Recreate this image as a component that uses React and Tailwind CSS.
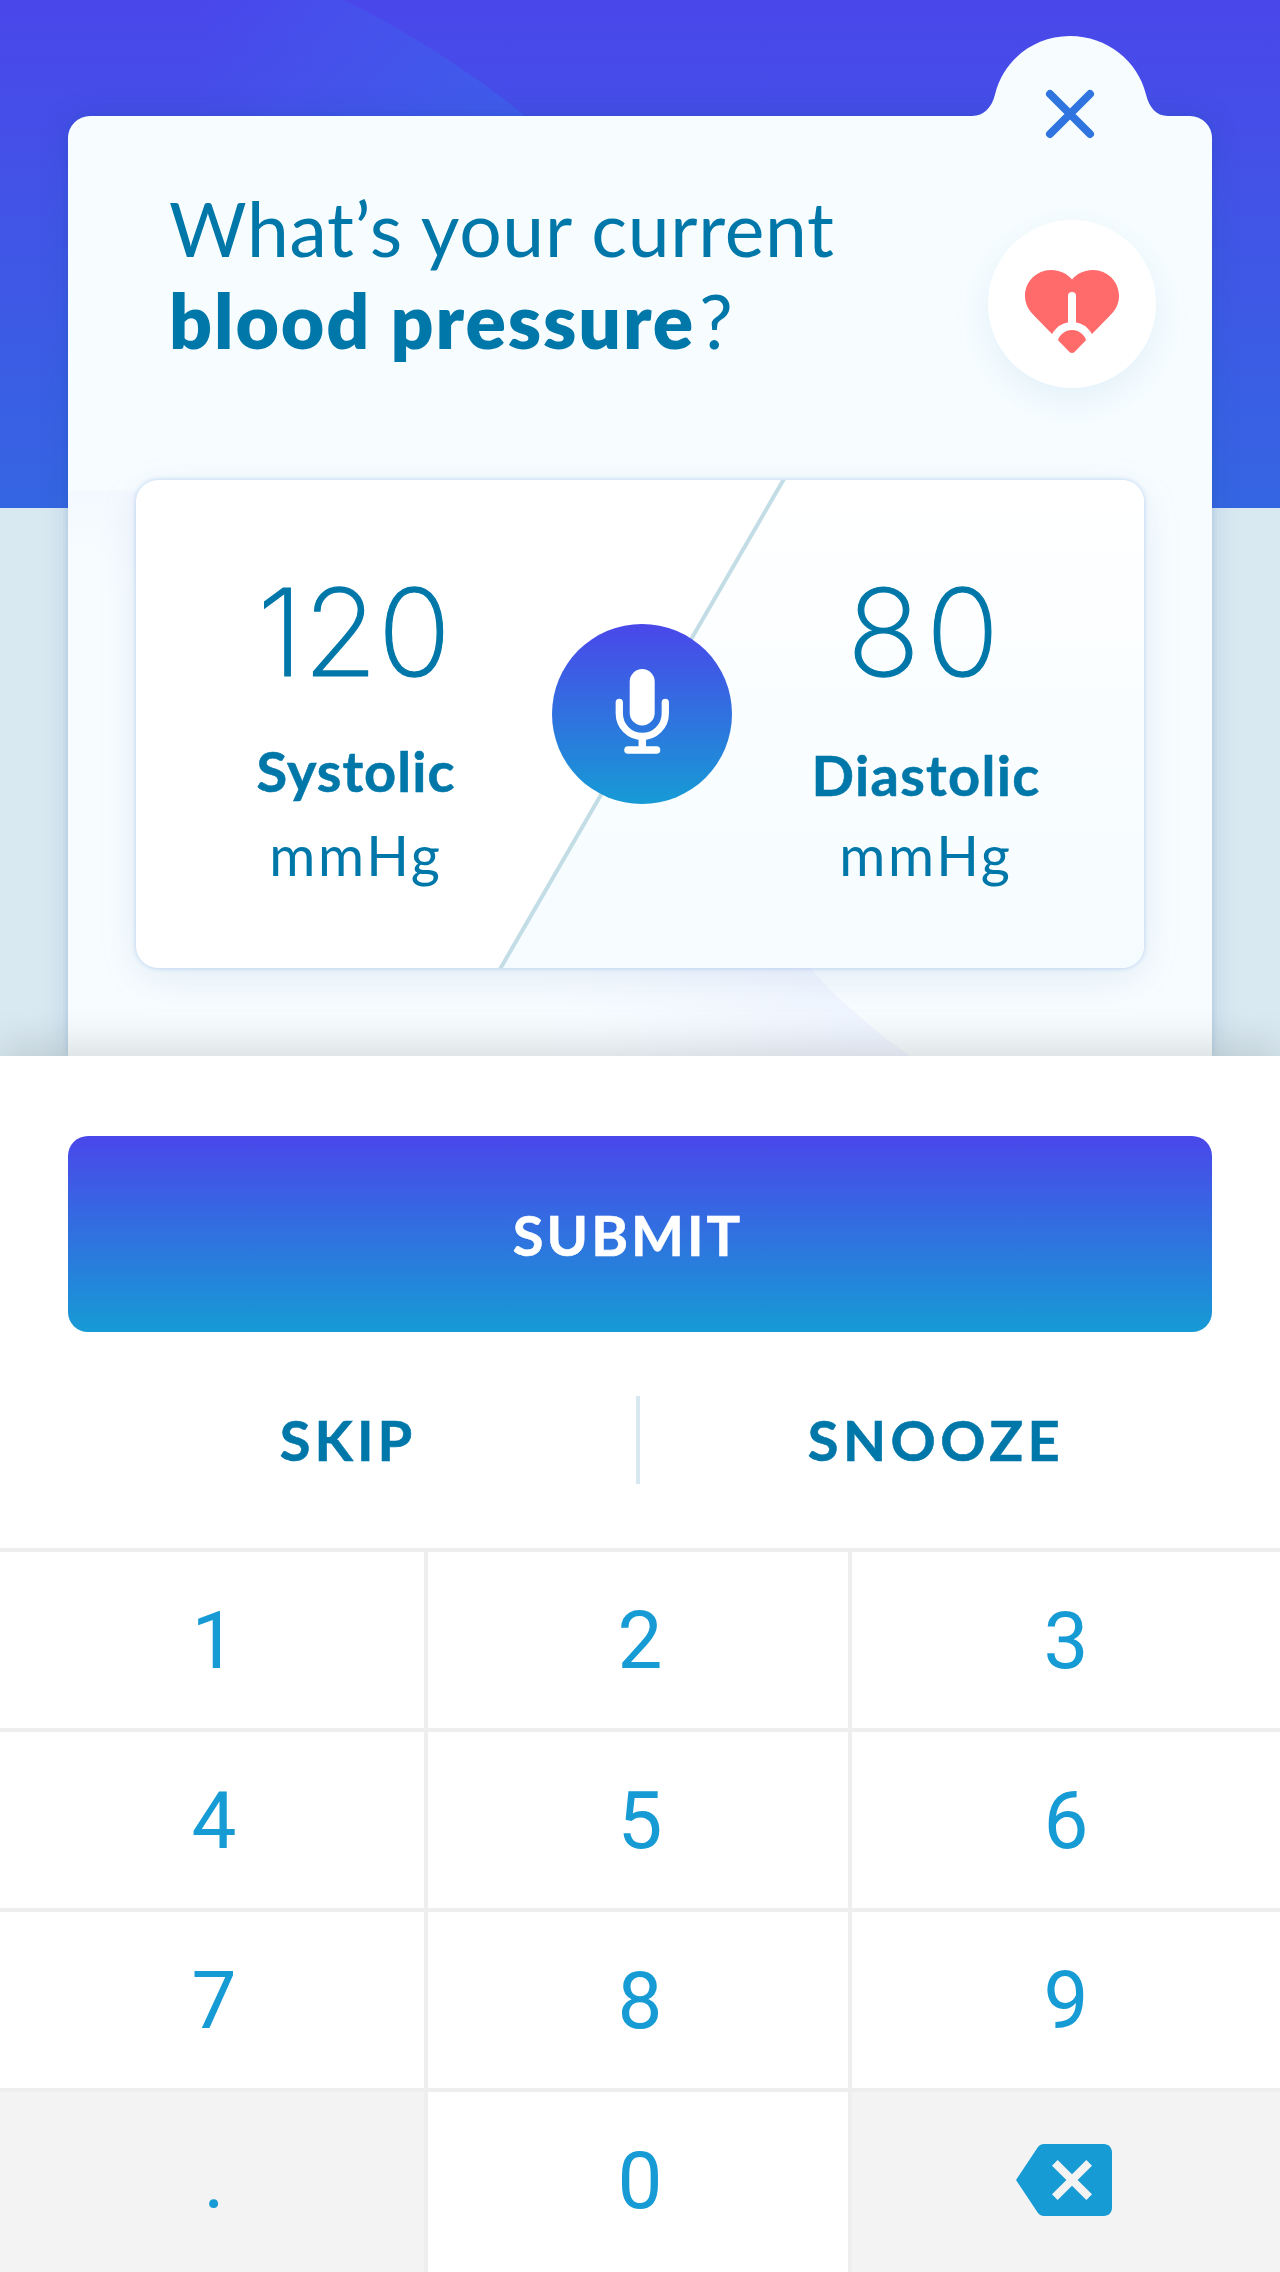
function HeaderGlow() {
  return (
    <svg className="absolute inset-0" width="1280" height="508" viewBox="0 0 1280 508" fill="none">
      <defs>
        <linearGradient id="glow" x1="200" y1="0" x2="520" y2="0" gradientUnits="userSpaceOnUse">
          <stop offset="0" stopColor="#3a6aee" stopOpacity="0" />
          <stop offset="1" stopColor="#3a6aee" stopOpacity="0.5" />
        </linearGradient>
      </defs>
      <path d="M180 0H343C410 32 476 76 525 116C540 130 560 150 570 165H180Z" fill="url(#glow)" />
    </svg>
  );
}

function CardWaves() {
  return (
    <svg className="absolute left-0 top-0" width="1144" height="940" viewBox="68 116 1144 940" fill="none">
      <defs>
        <linearGradient id="waveX" x1="540" y1="0" x2="860" y2="0" gradientUnits="userSpaceOnUse">
          <stop offset="0" stopColor="#f0f5ff" stopOpacity="0" />
          <stop offset="1" stopColor="#eef4ff" stopOpacity="0.85" />
        </linearGradient>
        <linearGradient id="waveY" x1="0" y1="492" x2="0" y2="590" gradientUnits="userSpaceOnUse">
          <stop offset="0" stopColor="#f3f6ff" stopOpacity="0.6" />
          <stop offset="1" stopColor="#f3f6ff" stopOpacity="0" />
        </linearGradient>
      </defs>
      <rect x="68" y="491" width="120" height="100" fill="url(#waveY)" />
      <path d="M480 940H788C800 956 808 964 817 975C828 988 838 998 850 1008C868 1024 888 1041 910 1056H480Z" fill="url(#waveX)" />
    </svg>
  );
}

function CloseTab() {
  return (
    <button aria-label="Close" className="absolute right-[42px] -top-20 h-[120px] w-[200px]">
      <svg width="200" height="120" viewBox="970 36 200 120" fill="none">
        <path d="M970 117V116H972C984 116 992 107 995 94.500C1003 61 1033 36 1070 36C1107 36 1138 61 1146 94.500C1149 107 1156 116 1168 116H1170V117Z" fill="#f7fdff" />
        <path d="M1050 94L1090 134M1090 94L1050 134" stroke="#3074e0" strokeWidth="8" strokeLinecap="round" />
      </svg>
    </button>
  );
}

function HeartGauge() {
  return (
    <svg width="168" height="168" viewBox="988 220 168 168" fill="none">
      <path
        d="M1072 279.500C1067 273.500 1059.500 270 1051 270C1036.600 270 1025 281.600 1025 296C1025 303 1028 310 1034 315.500L1069.500 352Q1072 354 1074.500 352L1110 315.500C1116 310 1119 303 1119 296C1119 281.600 1107.400 270 1093 270C1084.500 270 1077 273.500 1072 279.500Z"
        fill="#ff6b6b"
      />
      <path d="M1072 296V326" stroke="#fff" strokeWidth="8" strokeLinecap="round" />
      <path d="M1053.300 344.700A18.700 18.700 0 0 1 1090.700 344.700" stroke="#fff" strokeWidth="8" />
    </svg>
  );
}

function Mic() {
  return (
    <svg width="180" height="180" viewBox="552 624 180 180" fill="none">
      <rect x="629.700" y="669" width="25" height="56.500" rx="12.500" fill="#fff" />
      <path d="M619.300 702.500V713.500A23 23 0 0 0 665.300 713.500V702.500" stroke="#fff" strokeWidth="7.300" strokeLinecap="round" />
      <path d="M642.300 737V750" stroke="#fff" strokeWidth="7.500" />
      <path d="M628 750H656.500" stroke="#fff" strokeWidth="7.600" strokeLinecap="round" />
    </svg>
  );
}

function Backspace() {
  return (
    <svg width="96" height="72" viewBox="0 3 24 18" fill="#169bd5">
      <path d="M22 3H7c-.69 0-1.230.350-1.590.880L0 12l5.410 8.110c.360.530.900.890 1.590.890h15c1.100 0 2-.900 2-2V5c0-1.100-.900-2-2-2zm-3 12.590L17.590 17 14 13.410 10.410 17 9 15.590 12.590 12 9 8.410 10.410 7 14 10.590 17.590 7 19 8.410 15.410 12 19 15.590z" />
    </svg>
  );
}

function Reading({ value, label, className, valueClass, labelClass, unitClass }) {
  return (
    <div className={`relative flex flex-col items-center pt-[92px] text-[56px] leading-[80px] whitespace-nowrap ${className}`}>
      <div className={`font-['Inter',sans-serif] text-[121px] leading-[120px] font-extralight [-webkit-text-stroke:1.2px_#0077a9] ${valueClass}`}>{value}</div>
      <div className={`font-bold [-webkit-text-stroke:0.6px_#0077a9] ${labelClass}`}>{label}</div>
      <div className={`tracking-[2.7px] ${unitClass}`}>mmHg</div>
    </div>
  );
}

const KEYS = ["1", "2", "3", "4", "5", "6", "7", "8", "9", ".", "0", "back"];

export default function App() {
  return (
    <div className="flex h-[2272px] w-[1280px] flex-col overflow-hidden bg-[#d9e9f1] font-['Lato',sans-serif] text-[#0077a9]">
      <section className="relative h-[1056px] shrink-0 px-[68px] pt-[116px]">
        <div className="absolute inset-x-0 top-0 h-[508px] bg-linear-to-b/srgb from-[#4a47ea] to-[#3566e2]">
          <HeaderGlow />
        </div>
        <div className="relative h-[940px] rounded-t-[22px] bg-[#f7fdff] px-[68px] shadow-[0_0_30px_rgba(20,80,150,0.16),0_0_6px_rgba(20,80,160,0.15)]">
          <CardWaves />
          <CloseTab />
          <div className="relative flex h-[364px] justify-between pt-[66px]">
            <h1 className="pl-[33px] text-[75px] leading-[92px] tracking-[0.7px] whitespace-nowrap">
              What’s your current
              <br />
              <span className="font-extrabold tracking-[1.9px]">blood pressure</span>
              <span className="pl-1">?</span>
            </h1>
            <div className="-mr-3 mt-[38px] h-[168px] w-[168px] rounded-full bg-white shadow-[0_12px_36px_rgba(60,140,200,0.11)]">
              <HeartGauge />
            </div>
          </div>
          <div className="relative flex h-[488px] w-[1008px] justify-between rounded-[22px] bg-white shadow-[0_0_5px_rgba(60,130,220,0.32),0_10px_40px_rgba(60,90,160,0.11)]">
            <svg className="absolute inset-0 rounded-[22px]" width="1008" height="488" viewBox="136 480 1008 488" fill="none">
              <defs>
                <linearGradient id="tint" x1="0" y1="480" x2="0" y2="968" gradientUnits="userSpaceOnUse">
                  <stop offset="0" stopColor="#fff" />
                  <stop offset="1" stopColor="#f5fcff" />
                </linearGradient>
              </defs>
              <path d="M784 480H1144V968H501Z" fill="url(#tint)" />
              <path d="M784.500 478L499.500 970" stroke="#c3dde6" strokeWidth="4" />
            </svg>
            <Reading value="120" label="Systolic" className="w-[440px]" valueClass="pr-1" labelClass="mt-[39px] tracking-[1px]" unitClass="mt-1" />
            <button aria-label="Dictate" className="absolute left-[416px] top-36 h-[180px] w-[180px] rounded-full bg-linear-to-b/srgb from-[#4a47ea] to-[#169bd5]">
              <Mic />
            </button>
            <Reading value="80" label="Diastolic" className="w-[436px]" valueClass="tracking-[6px]" labelClass="mt-[43px] tracking-[1.3px]" unitClass="" />
          </div>
        </div>
      </section>

      <section className="relative z-10 flex h-[1216px] flex-col bg-white shadow-[0_-8px_40px_rgba(0,0,0,0.14)]">
        <div className="px-[68px] pt-20">
          <button className="flex h-[196px] w-full items-center justify-center rounded-[20px] bg-linear-to-b/srgb from-[#4a47ea] to-[#169bd5] pt-0.5 pr-6 text-[56px] leading-[80px] font-bold tracking-[3px] text-white [-webkit-text-stroke:0.6px_#fff]">
            SUBMIT
          </button>
        </div>
        <div className="mt-16 flex h-[88px] items-center text-[56px] leading-[80px] font-bold [-webkit-text-stroke:0.6px_#0077a9] [text-shadow:0_10px_20px_rgba(60,60,160,0.08)]">
          <button className="w-[636px] pl-[60px] tracking-[4px]">SKIP</button>
          <div className="h-[88px] w-1 shrink-0 bg-[#d8e8f0]" />
          <button className="w-[592px] tracking-[4.500px]">SNOOZE</button>
        </div>
        <div className="mt-16 grid grid-cols-[428px_424px_428px] grid-rows-[180px_180px_180px_184px] font-['Roboto',sans-serif] text-[80px] leading-[94px] text-[#169bd5]">
          {KEYS.map((k) => (
            <div
              key={k}
              className={`flex items-center justify-center border-t-4 border-[#eeeeee] nth-[3n+1]:border-r-4 nth-[3n+1]:pl-1 nth-[3n+2]:border-r-4 nth-[3n+2]:pl-1 nth-[n+10]:pb-1 ${k === "." || k === "back" ? "bg-[#f3f3f3]" : ""} ${k === "back" ? "pr-1" : "pt-0.5"}`}
            >
              {k === "back" ? <Backspace /> : k}
            </div>
          ))}
        </div>
      </section>
    </div>
  );
}
